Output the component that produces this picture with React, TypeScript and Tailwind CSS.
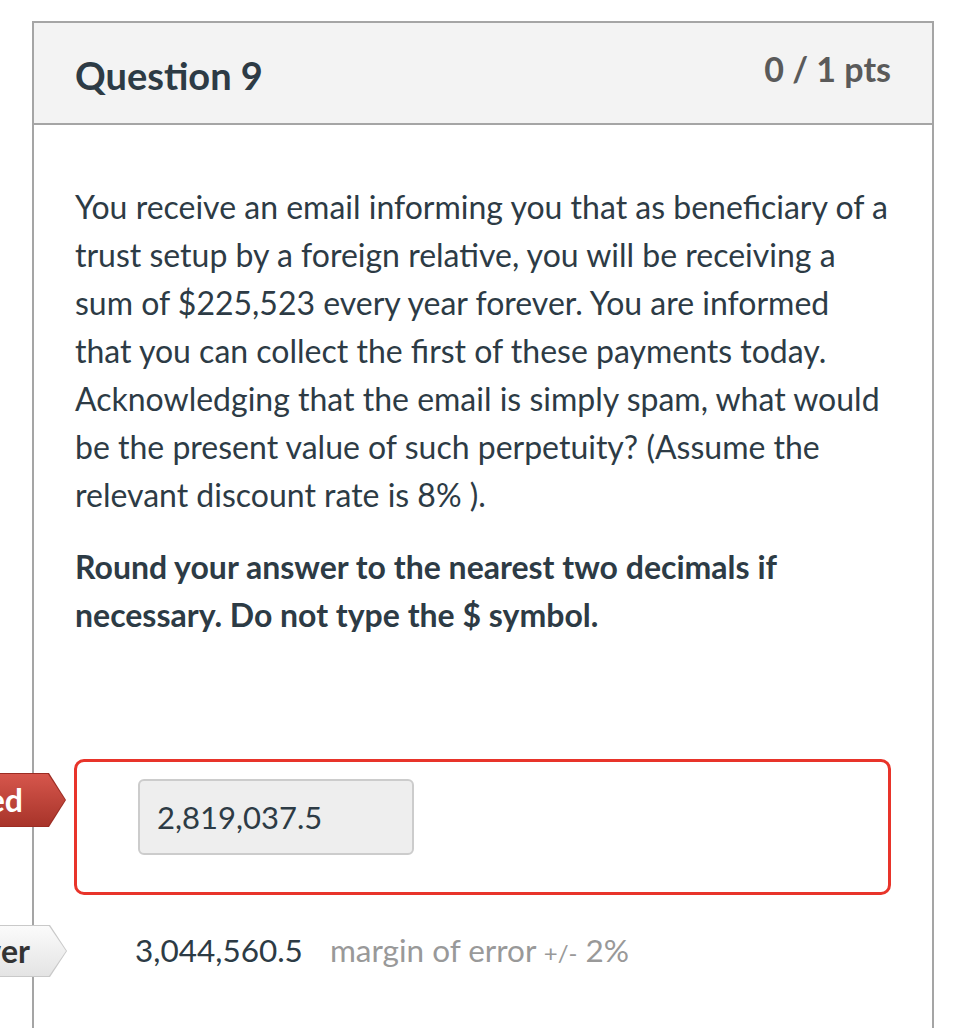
import React from 'react';

const FONT = { fontFamily: 'Lato, "Noto Sans", sans-serif' };

function Tag({ label, tone }: { label: string; tone: 'red' | 'gray' }) {
  const shape =
    '[clip-path:polygon(0_0,calc(100%-17px)_0,100%_50%,calc(100%-17px)_100%,0_100%)]';
  if (tone === 'red') {
    return (
      <div className={`absolute right-0 top-1/2 -translate-y-1/2 h-[54px] w-[300px] bg-[#9c2c23] ${shape}`}>
        <div
          className={`absolute inset-[1px] flex items-center justify-end pr-[42px] bg-gradient-to-b from-[#d6564c] to-[#a8342a] ${shape}`}
        >
          <span className="text-[32px] font-bold text-white leading-none">{label}</span>
        </div>
      </div>
    );
  }
  return (
    <div className={`absolute right-0 top-1/2 -translate-y-1/2 h-[52px] w-[300px] bg-[#c9c9c9] ${shape}`}>
      <div
        className={`absolute inset-[1px] flex items-center justify-end pr-[36px] bg-gradient-to-b from-[#fbfbfb] to-[#e4e4e4] ${shape}`}
      >
        <span className="text-[32px] font-bold text-[#333] leading-none">{label}</span>
      </div>
    </div>
  );
}

export default function App() {
  return (
    <div className="w-full h-[1028px] overflow-hidden bg-white" style={FONT}>
      <div className="ml-[32px] mt-[21px] w-[902px] border-2 border-b-0 border-[#a5a5a5] h-[1100px]">
        {/* header */}
        <div className="h-[102px] bg-[#f3f3f3] border-b-2 border-[#a5a5a5] px-[41px] flex items-start justify-between">
          <h2 className="mt-[33px] text-[38px] font-bold text-[#2d3b45] leading-none">Question 9</h2>
          <span className="mt-[29px] text-[34px] font-bold text-[#5a5a5a] leading-none">0 / 1 pts</span>
        </div>

        {/* body */}
        <div className="px-[41px] pt-[58px] text-[#2d3b45]">
          <p className="text-[32px] leading-[48px]">
            You receive an email informing you that as beneficiary of a trust setup by a foreign relative, you will
            be receiving a sum of $225,523 every year forever. You are informed that you can collect the first of
            these payments today. Acknowledging that the email is simply spam, what would be the present value of
            such perpetuity? (Assume the relevant discount rate is 8% ).
          </p>
          <p className="mt-[24px] text-[32px] leading-[48px] font-bold">
            Round your answer to the nearest two decimals if necessary. Do not type the $ symbol.
          </p>

          {/* your answer */}
          <div className="relative mt-[120px] -ml-px">
            <div className="absolute -left-[75px] top-[14px] w-[67px] h-[54px]">
              <Tag label="You Answered" tone="red" />
            </div>
            <div className="h-[136px] border-[3px] border-[#e8342a] rounded-[10px] pl-[61px] pt-[17px]">
              <div className="w-[276px] h-[76px] bg-[#eeeeee] border-2 border-[#cccccc] rounded-[6px] flex items-center pl-[17px]">
                <span className="text-[31px] leading-none">2,819,037.5</span>
              </div>
            </div>
          </div>

          {/* correct answer */}
          <div className="relative mt-[30px] h-[52px] flex items-center pl-[60px]">
            <div className="absolute -left-[75px] top-0 w-[67px] h-[52px]">
              <Tag label="Correct Answer" tone="gray" />
            </div>
            <span className="text-[31.5px] leading-none">3,044,560.5</span>
            <span className="ml-[27px] text-[31.5px] leading-none text-[#999999]">
              margin of error <span className="text-[24px]">+/-</span> 2%
            </span>
          </div>
        </div>
      </div>
    </div>
  );
}
